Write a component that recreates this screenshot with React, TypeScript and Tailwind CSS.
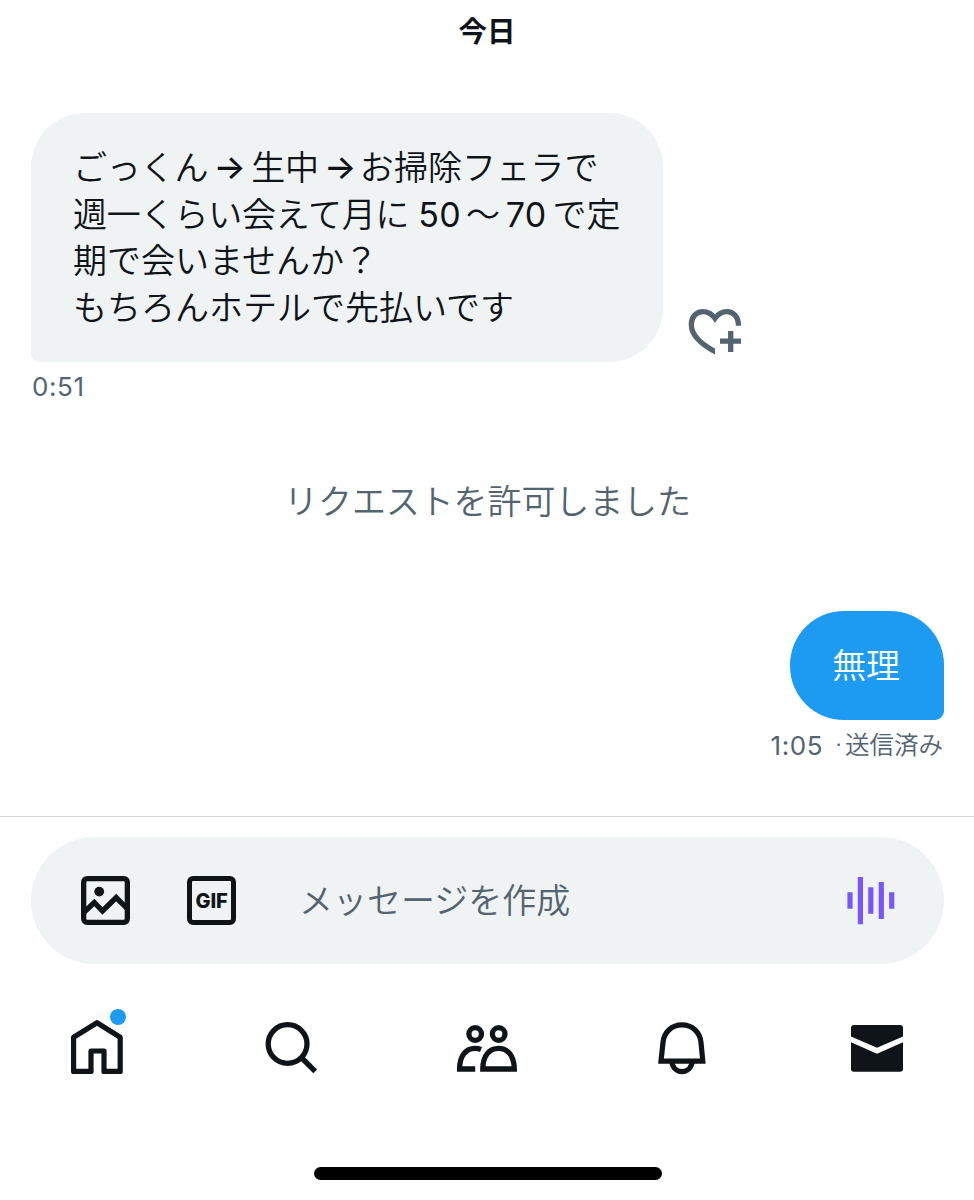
import React from "react";

const jp = "font-['Inter','Noto_Sans_CJK_JP',sans-serif]";

function Arrow() {
  return (
    <span className="inline-flex w-[43px] -translate-y-px justify-center font-['Inter',sans-serif] text-[34px] font-medium tracking-normal">
      →
    </span>
  );
}

function HeartPlus() {
  return (
    <svg width="56" height="50" viewBox="687 307 56 50" fill="none" stroke="#536471" strokeWidth="5.3">
      <clipPath id="heart-left">
        <path d="M687 307H743V325.7H715V357H687Z" />
      </clipPath>
      <path
        clipPath="url(#heart-left)"
        d="M738.4 327V325C738.4 316.5 733 311.6 727 311.6C721.5 311.6 718 314 715 318.3C712 314 708.5 311.6 703 311.6C696.5 311.6 691.3 316.8 691.3 324.5C691.3 334.5 701 344.5 717 352.6"
      />
      <path d="M720 341.2H741M730.7 331V352" />
    </svg>
  );
}

function ImageIcon() {
  return (
    <svg width="49" height="49" viewBox="0 0 49 49" fill="none" stroke="#0f1419" strokeWidth="5.3">
      <rect x="2.65" y="2.65" width="43.7" height="43.7" rx="3.5" />
      <circle cx="18.2" cy="15.6" r="4.9" fill="#0f1419" stroke="none" />
      <path d="M3 36.2L13.3 26.5L21.5 35L35.2 21.6L46.5 33" />
    </svg>
  );
}

function Waveform() {
  return (
    <svg width="48" height="48" viewBox="847 876.5 48 48" fill="none" stroke="#7856ff" strokeWidth="5.2">
      <path d="M850 891.8V908.3M860.4 876.5V923.7M870.8 886.8V913.3M881.3 881.5V918.5M891.7 891.8V908.3" />
    </svg>
  );
}

function Home() {
  return (
    <svg width="60" height="70" viewBox="67 1007 60 70" fill="none" stroke="#0f1419" strokeWidth="5.2" strokeLinejoin="round">
      <path d="M73.6 1037.2L97 1022.7L120.2 1037.2V1071.4H104V1051H91V1071.4H73.6Z" />
      <circle cx="118" cy="1017" r="8" fill="#1d9bf0" stroke="none" />
    </svg>
  );
}

function Search() {
  return (
    <svg width="60" height="70" viewBox="262 1007 60 70" fill="none" stroke="#0f1419" strokeWidth="5.3">
      <circle cx="287.6" cy="1044" r="19.4" />
      <path d="M301.3 1057.5L315.2 1071.3" />
    </svg>
  );
}

function People() {
  return (
    <svg width="64" height="70" viewBox="455 1007 64 70" fill="none" stroke="#0f1419" strokeWidth="5.3">
      <circle cx="475.2" cy="1034" r="6.3" />
      <circle cx="498.7" cy="1034" r="6.3" />
      <path d="M482.8 1069C482.8 1055.5 489.5 1048.4 498.5 1048.4S514.3 1055.5 514.3 1069Z" />
      <path d="M475.2 1069H459.6C459.6 1055.5 466 1048.4 475 1048.4C477.3 1048.4 479.2 1048.8 481 1049.5" />
    </svg>
  );
}

function Bell() {
  return (
    <svg width="60" height="70" viewBox="652 1007 60 70" fill="none" stroke="#0f1419" strokeWidth="5.2">
      <path d="M661 1061.1L663 1042.5C664 1032 672 1024.9 682 1024.9S700 1032 701 1042.5L702.8 1061.1Z" />
      <path d="M671.6 1061C672.4 1067.5 676.3 1071.6 682 1071.6S691.6 1067.5 692.4 1061" />
    </svg>
  );
}

function Mail() {
  return (
    <svg width="60" height="70" viewBox="847 1007 60 70" fill="#0f1419">
      <path d="M851 1036.6V1028Q851 1025 854 1025H900Q903 1025 903 1028V1036.6L877 1047.8Z" />
      <path d="M851 1042.2L877 1053.7L903 1042.2V1068.7Q903 1071.7 900 1071.7H854Q851 1071.7 851 1068.7Z" />
    </svg>
  );
}

export default function App() {
  return (
    <div className={`flex h-[1200px] w-[974px] flex-col bg-white text-[#0f1419] ${jp}`} lang="ja">
      <h1 className="mt-[11px] h-[42px] text-center text-[28.5px] font-bold leading-[42px]">今日</h1>

      <main className="flex flex-col pl-[31px] pr-[30px] pt-[60px]">
        <div className="flex items-end gap-[24px]">
          <div className="h-[249px] w-[632px] whitespace-nowrap rounded-[54px] rounded-bl-[9px] bg-[#eff3f4] pl-[42px] pt-[32px] text-[34px] font-[350] leading-[46.7px] tracking-[-0.2px]">
            <p>ごっくん<Arrow />生中<Arrow /><span className="-ml-[2px] tracking-[0.1px]">お掃除フェラで</span></p>
            <p>
              週一くらい会えて月に
              <span className="pl-[9px] pr-[5px] font-normal tracking-[0.3px]">50</span>〜
              <span className="pl-[6px] pr-[6px] font-normal tracking-[0.3px]">70</span>で定
            </p>
            <p className="tracking-normal">期で会いませんか？</p>
            <p className="tracking-normal">もちろんホテルで先払いです</p>
          </div>
          <div className="mb-[5px]">
            <HeartPlus />
          </div>
        </div>
        <time className="mt-[8px] h-[34px] pl-px text-[26px] leading-[34px] tracking-[0.6px] text-[#536471]">0:51</time>

        <p className="mt-[73px] h-[50px] text-center text-[34px] font-[350] leading-[50px] tracking-[-0.1px] text-[#536471]">
          リクエストを許可しました
        </p>

        <div className="mt-[84px] flex h-[109px] w-[154px] items-center justify-center self-end rounded-[54px] rounded-br-[9px] bg-[#1d9bf0] pr-[2px] text-[34px] font-[350] tracking-[-0.2px] text-white">
          無理
        </div>
        <div className="mt-[8px] flex h-[34px] items-center justify-end pr-px text-[#536471]">
          <span className="text-[26px] tracking-[0.6px]">1:05</span>
          <span className="ml-[12px] text-[24px] font-[350]">·</span>
          <span className="ml-[3px] text-[24.5px] font-[350]">送信済み</span>
        </div>
      </main>

      <footer className="mt-[54px] flex flex-1 flex-col border-t border-[#cfd4d8]">
        <div className="ml-[31px] mr-[30px] mt-[20px] flex h-[127px] items-center rounded-full bg-[#eff3f4] pl-[50px] pr-[49px]">
          <ImageIcon />
          <div className="ml-[57px] flex size-[49px] items-center justify-center rounded-[6px] border-[5.3px] border-[#0f1419] font-['Inter',sans-serif] text-[20px] font-extrabold leading-none tracking-[-0.2px]">
            GIF
          </div>
          <span className="ml-[63px] flex-1 text-[34px] font-[350] text-[#536471]">メッセージを作成</span>
          <Waveform />
        </div>
        <nav className="mt-[43px] grid h-[70px] grid-cols-5 justify-items-center">
          <Home />
          <Search />
          <People />
          <Bell />
          <Mail />
        </nav>
        <div className="mt-[90px] h-[13px] w-[348px] translate-x-px self-center rounded-full bg-black" />
      </footer>
    </div>
  );
}
